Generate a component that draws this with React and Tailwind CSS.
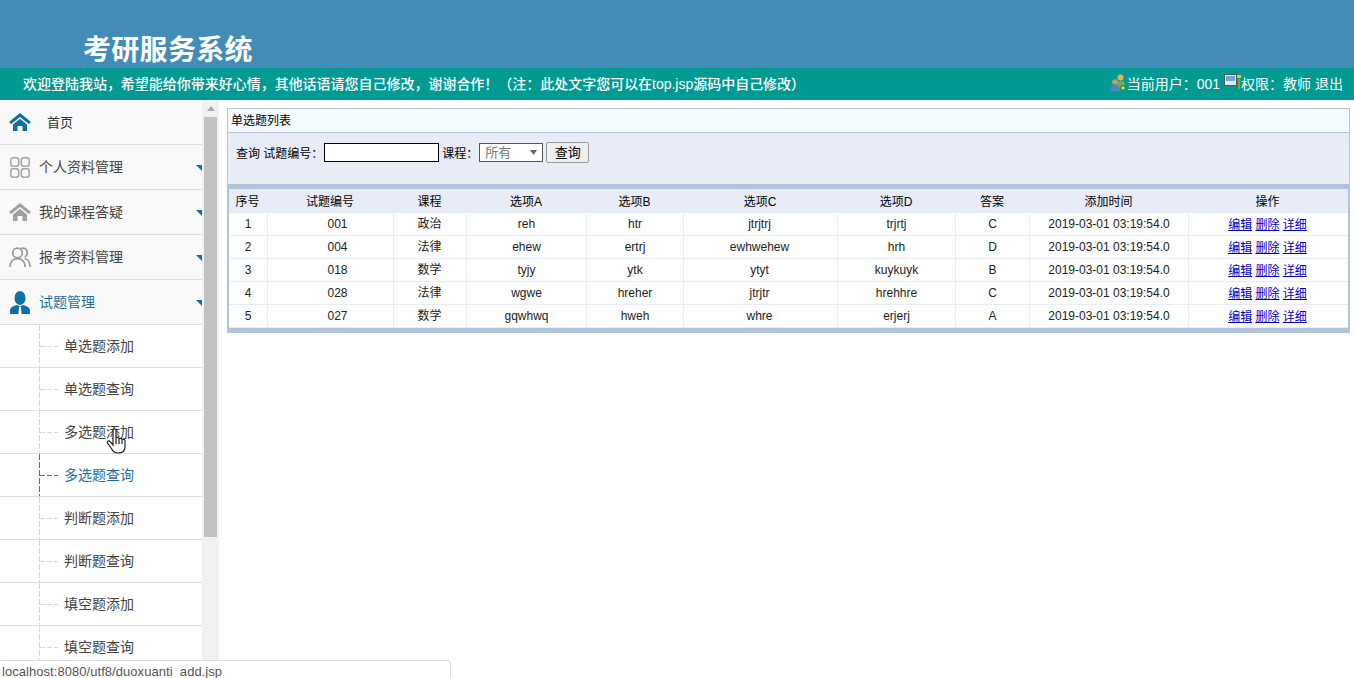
import React from 'react';

const sans = 'font-["Liberation_Sans","Noto_Sans_CJK_SC",sans-serif]';

const mainMenu = [
  { label: '个人资料管理', icon: 'grid' },
  { label: '我的课程答疑', icon: 'home' },
  { label: '报考资料管理', icon: 'users' },
  { label: '试题管理', icon: 'tie', active: true },
];

const subMenu = [
  { label: '单选题添加' },
  { label: '单选题查询' },
  { label: '多选题添加' },
  { label: '多选题查询', active: true },
  { label: '判断题添加' },
  { label: '判断题查询' },
  { label: '填空题添加' },
  { label: '填空题查询' },
];

const rows = [
  ['1', '001', '政治', 'reh', 'htr', 'jtrjtrj', 'trjrtj', 'C'],
  ['2', '004', '法律', 'ehew', 'ertrj', 'ewhwehew', 'hrh', 'D'],
  ['3', '018', '数学', 'tyjy', 'ytk', 'ytyt', 'kuykuyk', 'B'],
  ['4', '028', '法律', 'wgwe', 'hreher', 'jtrjtr', 'hrehhre', 'C'],
  ['5', '027', '数学', 'gqwhwq', 'hweh', 'whre', 'erjerj', 'A'],
];

const headers = ['序号', '试题编号', '课程', '选项A', '选项B', '选项C', '选项D', '答案', '添加时间', '操作'];
const colWidths = ['w-[39px]', 'w-[126px]', 'w-[73px]', 'w-[120px]', 'w-[97px]', 'w-[154px]', 'w-[118px]', 'w-[74px]', 'w-[159px]', 'w-[159px]'];
// the body cells don't sit quite centred under their headers
const cellPad = ['', 'pl-[14px]', 'pr-[1px]', '', '', 'pr-[2px]', '', ''];

const HomeIcon = ({ color }) => (
  <svg width="22" height="18" viewBox="0 0 22 18" fill={color}>
    <path d="M0 9L11 0l11 9-2 2-9-7-9 7z" />
    <path d="M4 11.500L11 5.800l7 5.700V18h-4.500v-5h-5v5H4z" />
  </svg>
);

const MenuIcon = ({ type }) => {
  if (type === 'grid') {
    return (
      <svg width="20" height="21" viewBox="0 0 20 21" fill="none" stroke="#a3a3a3" strokeWidth="1.5">
        <rect x="0.800" y="0.800" width="7.900" height="8.400" rx="2.500" />
        <rect x="11.300" y="0.800" width="7.900" height="8.400" rx="2.500" />
        <rect x="0.800" y="11.800" width="7.900" height="8.400" rx="2.500" />
        <rect x="11.300" y="11.800" width="7.900" height="8.400" rx="2.500" />
      </svg>
    );
  }
  if (type === 'home') return <HomeIcon color="#a0a0a0" />;
  if (type === 'users') {
    return (
      <svg width="22" height="20" viewBox="0 0 22 20" fill="none" stroke="#999999" strokeWidth="1.700">
        <circle cx="8.500" cy="6" r="4.800" />
        <path d="M12 1.600c3-1.400 6.300.6 6.300 4.200 0 1.900-1 3.500-2.600 4.300" />
        <path d="M1 20c0-5 2.800-8.400 7.500-8.400S16 15 16 20" />
        <path d="M15.500 11.500c3.400.6 5.500 3.500 5.500 8.500" />
      </svg>
    );
  }
  return (
    <svg width="20" height="23" viewBox="0 0 20 23" fill="#0e6fa5">
      <ellipse cx="10" cy="7" rx="5.500" ry="7" />
      <path d="M0 23v-3c0-3.500 3-5 7-6l3 1.500 3-1.500c4 1 7 2.500 7 6v3z" />
      <path d="M9 16h2l.5 7h-3z" fill="#ffffff" />
    </svg>
  );
};

const Connector = ({ active }) => {
  const stroke = active ? '#3a7ea3' : '#d8d8d8';
  return (
    <svg className="absolute left-[39px] top-0" width="20" height="42" viewBox="0 0 20 42" fill="none" stroke={stroke}>
      <path d="M.5 0v42" strokeDasharray="6 2" />
      <path d="M1 21.500h18" strokeDasharray="5 2" />
    </svg>
  );
};

const Sidebar = () => (
  <div className="flex w-[219px] shrink-0 overflow-hidden">
    <div className="w-[202px] shrink-0">
      <div className="flex h-[45px] items-center border-b border-[#dddddd] bg-[#f9f9f9] pl-[9px]">
        <HomeIcon color="#0e6fa5" />
        <span className="ml-[16px] pt-[1px] text-[13px] text-[#333333]">首页</span>
      </div>
      {mainMenu.map((item) => (
        <div key={item.label} className="relative flex h-[45px] items-center border-b border-[#dddddd] bg-[#f9f9f9] pl-[9px]">
          <div className="flex w-[22px] justify-center">
            <MenuIcon type={item.icon} />
          </div>
          <span className={`ml-2 text-[14px] ${item.active ? 'text-[#1d6f9f]' : 'text-[#444444]'}`}>{item.label}</span>
          <svg className="absolute right-0 top-[20px]" width="6" height="6" viewBox="0 0 6 6">
            <path d="M0 0h6v6z" fill="#0e6fa5" />
          </svg>
        </div>
      ))}
      {subMenu.map((item) => (
        <div key={item.label} className="relative flex h-[43px] items-center border-b border-[#dddddd] bg-white pl-[64px]">
          <Connector active={item.active} />
          <span className={`text-[14px] ${item.active ? 'text-[#1d6f9f]' : 'text-[#444444]'}`}>{item.label}</span>
        </div>
      ))}
    </div>
    <div className="flex w-[17px] shrink-0 flex-col items-center bg-[#f1f1f1]">
      <svg className="mt-[6px]" width="8" height="5" viewBox="0 0 8 5">
        <path d="M4 0l4 5H0z" fill="#a8a8a8" />
      </svg>
      <div className="mt-[6px] h-[420px] w-[13px] bg-[#c1c1c1]" />
    </div>
  </div>
);

const QuestionTable = () => (
  <table className="w-[1119px] table-fixed border-separate border-spacing-0 text-[12px] text-[#222222]">
    <thead>
      <tr className="h-[24px] bg-[#e8ecf6]">
        {headers.map((h, i) => (
          <th key={h} className={`${colWidths[i]} p-0 pr-[2px] pt-[1px] text-center font-normal text-black`}>{h}</th>
        ))}
      </tr>
    </thead>
    <tbody>
      {rows.map((row) => (
        <tr key={row[0]} className="h-[23px]">
          {row.map((cell, i) => (
            <td key={i} className={`border-b border-r border-[#e8ecf6] p-0 text-center ${cellPad[i]}`}>{cell}</td>
          ))}
          <td className="border-b border-r border-[#e8ecf6] p-0 text-center">2019-03-01 03:19:54.0</td>
          <td className="border-b border-[#e8ecf6] p-0 pr-[2px] pt-[1px] text-center text-[#0000cc]">
            <a href="#" className="underline">编辑</a> <a href="#" className="underline">删除</a> <a href="#" className="underline">详细</a>
          </td>
        </tr>
      ))}
    </tbody>
  </table>
);

const App = () => {
  return (
    <div className={`relative flex h-[678px] w-[1354px] flex-col overflow-hidden bg-white ${sans}`}>
      <div className="flex h-[68px] shrink-0 items-end bg-[#428db8] pl-[83px]">
        <h1 className='font-["Liberation_Serif","Noto_Sans_CJK_SC",serif] text-[28px] font-bold leading-[34px] tracking-[0.3px] text-white'>考研服务系统</h1>
      </div>

      <div className="flex h-[32px] shrink-0 items-center justify-between bg-[#009a93] pl-[23px] pr-[11px] pt-[1px] text-[14px] text-white">
        <span className="font-medium tracking-[-0.02px]">欢迎登陆我站，希望能给你带来好心情，其他话语请您自己修改，谢谢合作！（注：此处文字您可以在top.jsp源码中自己修改）</span>
        <div className="flex items-center">
          <svg className="mb-[3px]" width="17" height="18" viewBox="0 0 17 18">
            <circle cx="10.500" cy="3.500" r="3" fill="#e8b25c" />
            <path d="M7 7h7l1 7H7z" fill="#7da84a" />
            <circle cx="5" cy="8" r="2.800" fill="#d9945c" />
            <path d="M0 17c0-4 2-6 5-6s5 2 5 6z" fill="#4a86c8" />
            <circle cx="13" cy="14" r="3" fill="#3f8f3a" />
            <path d="M11.500 14h3M13 12.500v3" stroke="#fff" />
          </svg>
          <span>当前用户：001</span>
          <svg className="mb-[5px] ml-1" width="17" height="16" viewBox="0 0 17 16">
            <rect x="0.500" y="0.500" width="12" height="11" fill="#e8e8e8" stroke="#555555" />
            <rect x="2" y="2" width="9" height="5" fill="#6aa8e0" />
            <rect x="13" y="1" width="4" height="3" fill="#d8d820" />
            <rect x="14" y="5" width="2" height="10" fill="#8aa020" />
          </svg>
          <span>权限：教师 退出</span>
        </div>
      </div>

      <div className="flex min-h-0 flex-1">
        <Sidebar />
        <div className="ml-[8px] w-[1123px] pt-[8px]">
          <div className="flex h-[25px] items-center border border-[#b0c4de] bg-[#f3fbff] pl-[3px] text-[12px] text-black">单选题列表</div>
          <div className="flex h-[51px] items-start border-x border-[#b0c4de] bg-[#e8ecf6] pl-[8px] pt-[10px] text-[12px] text-black">
            <span className="leading-[23px]">查询 试题编号：</span>
            <input className="ml-[1px] h-[19px] w-[115px] border border-black bg-white" />
            <span className="ml-[3px] leading-[23px]">课程：</span>
            <div className="ml-[1px] flex h-[19px] w-[64px] items-center justify-between border border-[#555555] bg-white px-[5px] text-[13px] text-[#777777]">
              <span>所有</span>
              <svg width="7" height="5" viewBox="0 0 7 5">
                <path d="M0 0h7L3.500 5z" fill="#666666" />
              </svg>
            </div>
            <button className="ml-[3px] mt-[-1px] h-[21px] w-[43px] rounded-[2px] border border-[#999999] bg-[#efefef] text-[13px] text-black">查询</button>
          </div>
          <div className="border-x-2 border-y-[5px] border-[#b0c4de]">
            <QuestionTable />
          </div>
        </div>
      </div>

      {/* mouse pointer caught in the screenshot */}
      <svg className="absolute left-[106px] top-[428px]" width="20" height="26" viewBox="0 0 20 26" fill="#ffffff" stroke="#222222" strokeWidth="1.200">
        <path d="M7 2C7 .5 10 .5 10 2v8c0-1 3-1 3 .5v.5c0-1 3-1 3 .5v.5c0-1 3-1 3 .5V19c0 4-3 6-7 6-4 0-5-2-7-5l-3.500-5C.5 13 3 12 4.500 14L7 17z" />
        <path d="M10 10v6M13 11v5M16 12v4" fill="none" />
      </svg>

      <div className="absolute bottom-0 left-0 flex h-[18px] w-[451px] items-start overflow-hidden rounded-tr-[4px] border-r border-t border-[#dddddd] bg-white pl-[2px] pt-[2px] text-[13px] leading-[18px] tracking-[0.05px] text-[#555555]">
        localhost:8080/utf8/duoxuanti_add.jsp
      </div>
    </div>
  );
};

export default App;
